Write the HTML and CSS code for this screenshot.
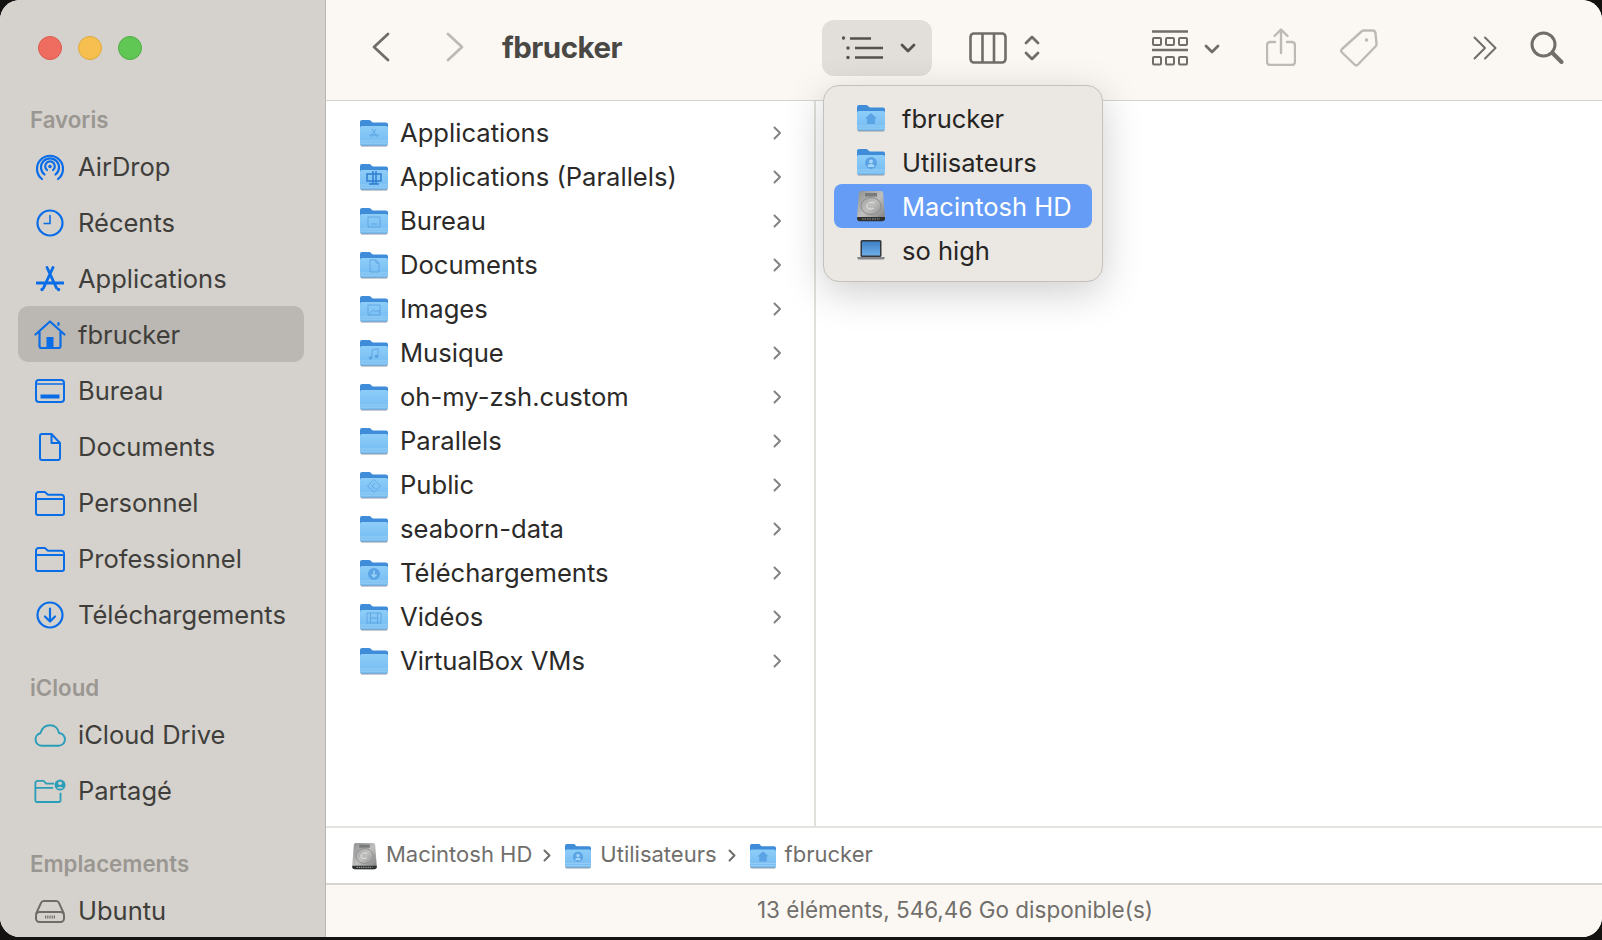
FILE: index.html
```html
<!DOCTYPE html>
<html>
<head>
<title>fbrucker</title>
<link rel="stylesheet" href="styles.css">
</head>
<body>

<svg class="defs" width="0" height="0">
  <defs>
    <linearGradient id="folder-front" x1="0" y1="0" x2="0" y2="1">
      <stop offset="0" stop-color="#8dcdf8"/>
      <stop offset="1" stop-color="#74bbf2"/>
    </linearGradient>
    <linearGradient id="disk-body" x1="0" y1="0" x2="1" y2="1">
      <stop offset="0" stop-color="#8f9190"/>
      <stop offset="0.5" stop-color="#bfc0be"/>
      <stop offset="1" stop-color="#787a79"/>
    </linearGradient>
    <linearGradient id="laptop-screen" x1="0" y1="0" x2="0" y2="1">
      <stop offset="0" stop-color="#3f7fc4"/>
      <stop offset="1" stop-color="#6fb0ea"/>
    </linearGradient>
    <symbol id="folder" viewBox="0 0 28 28">
      <path d="M0.5 26V7h27v19a1.500 1.500 0 0 1-1.500 1.500H2a1.500 1.500 0 0 1-1.500-1.500z" fill="#8d9aa5"/>
      <path d="M0 3a2 2 0 0 1 2-2h7.500c1.500 0 2 2.500 3.500 2.500h13a2 2 0 0 1 2 2V12H0z" fill="#3f8cd9"/>
      <path d="M0 9a2 2 0 0 1 2-2h24a2 2 0 0 1 2 2v15.500a2 2 0 0 1-2 2H2a2 2 0 0 1-2-2z" fill="url(#folder-front)"/>
      <path d="M0 22h28M0 24.200h28" stroke="#a5d6f7" stroke-width="0.7" fill="none"/>
    </symbol>
    <symbol id="disk" viewBox="0 0 28 32">
      <path d="M4 1h20c1.500 0 2 1 2.200 2.500L28 27a3 3 0 0 1-3 4H3a3 3 0 0 1-3-4L1.800 3.500C2 2 2.500 1 4 1z" fill="url(#disk-body)"/>
      <rect x="8" y="3" width="12" height="3.500" fill="#77797a"/>
      <ellipse cx="14" cy="16" rx="10" ry="8.500" fill="none" stroke="#8a8c8b" stroke-width="1"/>
      <path d="M17 13c-4-2-8 1-7 4 1 2.500 5 2.500 7 1" fill="none" stroke="#e6e7e6" stroke-width="1"/>
      <path d="M0.300 27H27.700L28 28a3 3 0 0 1-3 3.200H3A3 3 0 0 1 0 28z" fill="#2f3131"/>
      <path d="M5 29h18" stroke="#9a9c9b" stroke-width="1.200" stroke-dasharray="1.500 1"/>
    </symbol>
    <symbol id="side-folder" viewBox="0 0 30 25">
      <path d="M1 22V3.500A2.500 2.500 0 0 1 3.500 1h6.200c1.500 0 2 2.800 3.800 2.800h13A2.500 2.500 0 0 1 29 6.300V22a2 2 0 0 1-2 2H3a2 2 0 0 1-2-2zM1 8h28" fill="none" stroke="currentColor" stroke-width="2"/>
    </symbol>
  </defs>
</svg>

<div class="window">

  <aside class="sidebar">
    <div class="traffic">
      <span class="light red"></span>
      <span class="light yellow"></span>
      <span class="light green"></span>
    </div>

    <div class="side-label">Favoris</div>
    <div class="side-row">
      <span class="side-icon"><svg width="30" height="30" viewBox="0 0 30 30" fill="none" stroke="currentColor" stroke-width="2.200" stroke-linecap="round"><path d="M7 27A13 13 0 1 1 23 27"/><path d="M9.500 22.500A9 9 0 1 1 20.500 22.500"/><path d="M12 18A4.800 4.800 0 1 1 18 18"/><circle cx="15" cy="14.500" r="1.800" fill="currentColor" stroke="none"/></svg></span>
      AirDrop
    </div>
    <div class="side-row">
      <span class="side-icon"><svg width="28" height="28" viewBox="0 0 28 28" fill="none" stroke="currentColor" stroke-width="2.200"><circle cx="14" cy="14" r="12.500"/><path d="M14 6v8.500H7.500" stroke-width="1.600"/></svg></span>
      Récents
    </div>
    <div class="side-row">
      <span class="side-icon"><svg width="28" height="26" viewBox="0 0 28 26" fill="none" stroke="currentColor" stroke-width="2.900" stroke-linecap="round"><path d="M11 1.500l9.500 20.500M17 1.500L7.500 22M1 17h26"/><path d="M6 23.500h.1M22.500 23.500h.1" stroke-width="3.400"/></svg></span>
      Applications
    </div>
    <div class="side-row selected">
      <span class="side-icon"><svg width="32" height="30" viewBox="0 0 32 30" fill="none" stroke="currentColor" stroke-width="2.200" stroke-linecap="round" stroke-linejoin="round"><path d="M1.500 14.500L16 1.500l14.500 13M24.500 5V3M5.500 12v14a2 2 0 0 0 2 2h17a2 2 0 0 0 2-2V12"/><rect x="12.500" y="17" width="7" height="11" fill="currentColor" stroke="none"/></svg></span>
      fbrucker
    </div>
    <div class="side-row">
      <span class="side-icon"><svg width="30" height="24" viewBox="0 0 30 24" fill="none" stroke="currentColor" stroke-width="2"><rect x="1" y="1" width="28" height="22" rx="3"/><path d="M1 5h28" stroke-width="1.500"/><rect x="5.500" y="15.500" width="19" height="4" fill="currentColor" stroke="none"/></svg></span>
      Bureau
    </div>
    <div class="side-row">
      <span class="side-icon"><svg width="22" height="28" viewBox="0 0 22 28" fill="none" stroke="currentColor" stroke-width="2" stroke-linejoin="round"><path d="M1 3a2 2 0 0 1 2-2h9.500L21 10v15a2 2 0 0 1-2 2H3a2 2 0 0 1-2-2z"/><path d="M12.500 1v9H21"/></svg></span>
      Documents
    </div>
    <div class="side-row">
      <span class="side-icon"><svg width="30" height="25"><use href="#side-folder"/></svg></span>
      Personnel
    </div>
    <div class="side-row">
      <span class="side-icon"><svg width="30" height="25"><use href="#side-folder"/></svg></span>
      Professionnel
    </div>
    <div class="side-row">
      <span class="side-icon"><svg width="28" height="28" viewBox="0 0 28 28" fill="none" stroke="currentColor" stroke-width="2.200" stroke-linecap="round" stroke-linejoin="round"><circle cx="14" cy="14" r="12.500"/><path d="M14 7.500v12.500M9 15.500l5 5 5-5"/></svg></span>
      Téléchargements
    </div>

    <div class="side-label spaced">iCloud</div>
    <div class="side-row teal">
      <span class="side-icon"><svg width="33" height="23" viewBox="0 0 33 23" fill="none" stroke="currentColor" stroke-width="2" stroke-linejoin="round"><path d="M8 22a6.500 6.500 0 0 1-1.500-12.800C8 4.500 11.500 1 16.500 1c5 0 8.500 3.500 9.300 8a6.500 6.500 0 0 1-.8 13z"/></svg></span>
      iCloud Drive
    </div>
    <div class="side-row teal">
      <span class="side-icon"><svg width="35" height="26" viewBox="0 0 35 26" fill="none" stroke="currentColor" stroke-width="2"><path d="M22 5H14c-1.800 0-2.300-3-3.800-3H4a2.500 2.500 0 0 0-2.500 2.500V23a2 2 0 0 0 2 2H27a2 2 0 0 0 2-2V15M1.500 9.500H21"/><circle cx="28.500" cy="6.500" r="6" fill="currentColor" stroke="none"/><circle cx="28.500" cy="4.500" r="2" fill="#d5d2cd" stroke="none"/><path d="M24.800 10.200a4 3 0 0 1 7.400 0z" fill="#d5d2cd" stroke="none"/></svg></span>
      Partagé
    </div>

    <div class="side-label spaced">Emplacements</div>
    <div class="side-row grey">
      <span class="side-icon"><svg width="30" height="23" viewBox="0 0 30 23" fill="none" stroke="currentColor" stroke-width="2"><path d="M1 14L6 3a3 3 0 0 1 2.800-2h12.400A3 3 0 0 1 24 3l5 11"/><rect x="1" y="12" width="28" height="10" rx="3.500"/><path d="M10 17h11" stroke-width="3" stroke-dasharray="1.200 1"/></svg></span>
      Ubuntu
    </div>
  </aside>

  <div class="main">
    <header class="toolbar">
      <svg class="tb-back" width="18" height="30" viewBox="0 0 18 30" fill="none" stroke="#716e69" stroke-width="2.800" stroke-linecap="round" stroke-linejoin="round"><path d="M16 2L2 15l14 13"/></svg>
      <svg class="tb-forward" width="18" height="30" viewBox="0 0 18 30" fill="none" stroke="#bdbab5" stroke-width="2.800" stroke-linecap="round" stroke-linejoin="round"><path d="M2 2l14 13L2 28"/></svg>
      <div class="tb-title">fbrucker</div>

      <div class="tb-button">
        <svg width="42" height="24" viewBox="0 0 42 24" fill="none" stroke="#55524e" stroke-width="2.400"><path d="M8 2.500h21M13 12h28M13 21.500h28"/><circle cx="1.500" cy="2" r="1.700" fill="#55524e" stroke="none"/><circle cx="6" cy="12" r="1.700" fill="#55524e" stroke="none"/><circle cx="6" cy="21.500" r="1.700" fill="#55524e" stroke="none"/></svg>
        <svg class="chev" width="16" height="10" viewBox="0 0 16 10" fill="none" stroke="#55524e" stroke-width="2.800" stroke-linecap="round" stroke-linejoin="round"><path d="M2 2l6 6 6-6"/></svg>
      </div>

      <svg class="tb-columns" width="38" height="32" viewBox="0 0 38 32" fill="none" stroke="#716e69" stroke-width="2.600"><rect x="1.500" y="1.500" width="35" height="29" rx="3.500"/><path d="M13.500 1.500v29M25 1.500v29"/></svg>
      <svg class="tb-updown" width="16" height="28" viewBox="0 0 16 28" fill="none" stroke="#716e69" stroke-width="2.800" stroke-linecap="round" stroke-linejoin="round"><path d="M2 9l6-6 6 6M2 19l6 6 6-6"/></svg>

      <svg class="tb-grid" width="36" height="36" viewBox="0 0 36 36" fill="none" stroke="#716e69" stroke-width="2"><path d="M0 1.500h36M0 20h36" stroke-width="2.600"/><rect x="1" y="8" width="8" height="7" rx="1"/><rect x="14" y="8" width="8" height="7" rx="1"/><rect x="27" y="8" width="8" height="7" rx="1"/><rect x="1" y="27" width="8" height="7.500" rx="1"/><rect x="14" y="27" width="8" height="7.500" rx="1"/><rect x="27" y="27" width="8" height="7.500" rx="1"/></svg>
      <svg class="tb-gridchev" width="16" height="10" viewBox="0 0 16 10" fill="none" stroke="#716e69" stroke-width="2.800" stroke-linecap="round" stroke-linejoin="round"><path d="M2 2l6 6 6-6"/></svg>

      <svg class="tb-share" width="30" height="38" viewBox="0 0 30 38" fill="none" stroke="#bdbab5" stroke-width="2.400" stroke-linecap="round" stroke-linejoin="round"><path d="M9 14H4a3 3 0 0 0-3 3v17a3 3 0 0 0 3 3h22a3 3 0 0 0 3-3V17a3 3 0 0 0-3-3h-5M15 25V2M8.500 8L15 1.500 21.500 8"/></svg>
      <svg class="tb-tag" width="38" height="38" viewBox="0 0 38 38" fill="none" stroke="#bdbab5" stroke-width="2.400" stroke-linejoin="round"><path d="M21.500 2.500a3 3 0 0 1 2-1h9a3 3 0 0 1 3 2.500l1 11a3 3 0 0 1-.8 2.200L18 35.500a2.500 2.500 0 0 1-3.500 0L2 23.500a2.500 2.500 0 0 1 0-3.500z"/><circle cx="26.500" cy="11" r="1.800" fill="#bdbab5" stroke="none"/></svg>

      <svg class="tb-more" width="24" height="24" viewBox="0 0 24 24" fill="none" stroke="#716e69" stroke-width="2" stroke-linecap="round" stroke-linejoin="round"><path d="M1.500 1.500L12 12 1.500 22.500M12 1.500L22.500 12 12 22.500"/></svg>
      <svg class="tb-search" width="34" height="33" viewBox="0 0 34 33" fill="none" stroke="#716e69" stroke-width="3" stroke-linecap="round"><circle cx="13.500" cy="13.500" r="11.500"/><path d="M22.500 22l9 9" stroke-width="4"/></svg>
    </header>

    <div class="content">
      <div class="column">
        <div class="file-row">
          <svg class="folder" viewBox="0 0 28 28"><use href="#folder"/><path class="glyph-line" d="M12 10l5 8M16 10l-5 8M9 16h10"/></svg>
          <span class="file-name">Applications</span>
          <svg class="more-chev" width="9" height="14" viewBox="0 0 9 14"><path d="M1.500 1.500L7 7l-5.500 5.500"/></svg>
        </div>
        <div class="file-row">
          <svg class="folder" viewBox="0 0 28 28"><use href="#folder"/><path class="glyph-dark" d="M7 11h14v7H7zM13 8v13M16 8v13M9 21h10"/></svg>
          <span class="file-name">Applications (Parallels)</span>
          <svg class="more-chev" width="9" height="14" viewBox="0 0 9 14"><path d="M1.500 1.500L7 7l-5.500 5.500"/></svg>
        </div>
        <div class="file-row">
          <svg class="folder" viewBox="0 0 28 28"><use href="#folder"/><path class="glyph-line" d="M8 10h12v10H8zM11 17h6"/></svg>
          <span class="file-name">Bureau</span>
          <svg class="more-chev" width="9" height="14" viewBox="0 0 9 14"><path d="M1.500 1.500L7 7l-5.500 5.500"/></svg>
        </div>
        <div class="file-row">
          <svg class="folder" viewBox="0 0 28 28"><use href="#folder"/><path class="glyph-line" d="M10 9h6l3 3v9h-9zM16 9v3h3"/></svg>
          <span class="file-name">Documents</span>
          <svg class="more-chev" width="9" height="14" viewBox="0 0 9 14"><path d="M1.500 1.500L7 7l-5.500 5.500"/></svg>
        </div>
        <div class="file-row">
          <svg class="folder" viewBox="0 0 28 28"><use href="#folder"/><path class="glyph-line" d="M8 10h12v10H8zM9 19l4-4 3 2 2-2 2 3"/></svg>
          <span class="file-name">Images</span>
          <svg class="more-chev" width="9" height="14" viewBox="0 0 9 14"><path d="M1.500 1.500L7 7l-5.500 5.500"/></svg>
        </div>
        <div class="file-row">
          <svg class="folder" viewBox="0 0 28 28"><use href="#folder"/><path class="glyph-line" d="M12 19v-8l6-1.500v8"/><circle class="glyph-fill" cx="10.500" cy="19" r="1.800"/><circle class="glyph-fill" cx="16.500" cy="17.500" r="1.800"/></svg>
          <span class="file-name">Musique</span>
          <svg class="more-chev" width="9" height="14" viewBox="0 0 9 14"><path d="M1.500 1.500L7 7l-5.500 5.500"/></svg>
        </div>
        <div class="file-row">
          <svg class="folder" viewBox="0 0 28 28"><use href="#folder"/></svg>
          <span class="file-name">oh-my-zsh.custom</span>
          <svg class="more-chev" width="9" height="14" viewBox="0 0 9 14"><path d="M1.500 1.500L7 7l-5.500 5.500"/></svg>
        </div>
        <div class="file-row">
          <svg class="folder" viewBox="0 0 28 28"><use href="#folder"/></svg>
          <span class="file-name">Parallels</span>
          <svg class="more-chev" width="9" height="14" viewBox="0 0 9 14"><path d="M1.500 1.500L7 7l-5.500 5.500"/></svg>
        </div>
        <div class="file-row">
          <svg class="folder" viewBox="0 0 28 28"><use href="#folder"/><path class="glyph-line" d="M14 8.500l6.500 6.500-6.500 6.500L7.500 15zM15 12l-3 3 3 3"/></svg>
          <span class="file-name">Public</span>
          <svg class="more-chev" width="9" height="14" viewBox="0 0 9 14"><path d="M1.500 1.500L7 7l-5.500 5.500"/></svg>
        </div>
        <div class="file-row">
          <svg class="folder" viewBox="0 0 28 28"><use href="#folder"/></svg>
          <span class="file-name">seaborn-data</span>
          <svg class="more-chev" width="9" height="14" viewBox="0 0 9 14"><path d="M1.500 1.500L7 7l-5.500 5.500"/></svg>
        </div>
        <div class="file-row">
          <svg class="folder" viewBox="0 0 28 28"><use href="#folder"/><circle class="glyph-fill" cx="14" cy="15" r="6"/><path class="glyph-cut" d="M14 11.500v6M11.500 15.500l2.500 2.500 2.500-2.500"/></svg>
          <span class="file-name">Téléchargements</span>
          <svg class="more-chev" width="9" height="14" viewBox="0 0 9 14"><path d="M1.500 1.500L7 7l-5.500 5.500"/></svg>
        </div>
        <div class="file-row">
          <svg class="folder" viewBox="0 0 28 28"><use href="#folder"/><path class="glyph-line" d="M7 10h14v10H7zM10.500 10v10M17.500 10v10M10.500 15h7"/></svg>
          <span class="file-name">Vidéos</span>
          <svg class="more-chev" width="9" height="14" viewBox="0 0 9 14"><path d="M1.500 1.500L7 7l-5.500 5.500"/></svg>
        </div>
        <div class="file-row">
          <svg class="folder" viewBox="0 0 28 28"><use href="#folder"/></svg>
          <span class="file-name">VirtualBox VMs</span>
          <svg class="more-chev" width="9" height="14" viewBox="0 0 9 14"><path d="M1.500 1.500L7 7l-5.500 5.500"/></svg>
        </div>
      </div>
      <div class="column-empty"></div>
    </div>

    <div class="pathbar">
      <svg class="path-disk" width="25" height="28"><use href="#disk"/></svg>
      <span>Macintosh HD</span>
      <svg class="path-sep" width="8" height="13" viewBox="0 0 8 13"><path d="M1.500 1.500l5 5-5 5"/></svg>
      <svg class="path-folder" viewBox="0 0 28 28"><use href="#folder"/><circle class="glyph-fill" cx="14" cy="15" r="5.500"/><circle class="glyph-cut-fill" cx="14" cy="13.500" r="1.800"/><path class="glyph-cut-fill" d="M11 18.500a3 2.500 0 0 1 6 0z"/></svg>
      <span>Utilisateurs</span>
      <svg class="path-sep" width="8" height="13" viewBox="0 0 8 13"><path d="M1.500 1.500l5 5-5 5"/></svg>
      <svg class="path-folder" viewBox="0 0 28 28"><use href="#folder"/><path class="glyph-home" d="M14 9l6 5.500h-2V20h-8v-5.500H8z"/></svg>
      <span>fbrucker</span>
    </div>

    <footer class="statusbar">13 éléments, 546,46 Go disponible(s)</footer>
  </div>

  <div class="path-menu">
    <div class="menu-row">
      <svg class="menu-icon" viewBox="0 0 28 28"><use href="#folder"/><path class="glyph-home" d="M14 9l6 5.500h-2V20h-8v-5.500H8z"/></svg>
      fbrucker
    </div>
    <div class="menu-row">
      <svg class="menu-icon" viewBox="0 0 28 28"><use href="#folder"/><circle class="glyph-fill" cx="14" cy="15" r="6"/><circle class="glyph-cut-fill" cx="14" cy="13.500" r="2"/><path class="glyph-cut-fill" d="M10.500 19a3.500 3 0 0 1 7 0z"/></svg>
      Utilisateurs
    </div>
    <div class="menu-row active">
      <svg class="menu-icon tall" width="28" height="32"><use href="#disk"/></svg>
      Macintosh HD
    </div>
    <div class="menu-row">
      <svg class="menu-icon" viewBox="0 0 28 28"><rect x="3.500" y="4" width="21" height="17" rx="1.500" fill="#33363b"/><rect x="5" y="5.500" width="18" height="14" fill="url(#laptop-screen)"/><path d="M0 21h28l-1 2.500H1z" fill="#85878a"/></svg>
      so high
    </div>
  </div>

</div>

</body>
</html>
```

FILE: styles.css
```css
html, body {
  height: 100%;
  margin: 0;
}

body {
  background-color: #141312;
  font-family: Inter, "Liberation Sans", sans-serif;
  overflow: hidden;
}

.defs {
  display: block;
  height: 0;
}

.window {
  position: relative;
  display: flex;
  width: 1602px;
  height: 937px;
  border-radius: 20px;
  overflow: hidden;
  background-color: #fff;
}

/* sidebar */

.sidebar {
  width: 325px;
  flex-shrink: 0;
  border-right: 1px solid #b9b6b1;
  background-color: #d5d2cd;
  overflow: hidden;
}

.traffic {
  display: flex;
  gap: 16px;
  height: 100px;
  padding: 36px 0 0 38px;
  box-sizing: border-box;
}

.light {
  width: 24px;
  height: 24px;
  border-radius: 50%;
  box-sizing: border-box;
}
.red {
  background-color: #ef6c60;
  border: 1px solid #dc5a4e;
}
.yellow {
  background-color: #f6bf4f;
  border: 1px solid #e0a83c;
}
.green {
  background-color: #60c654;
  border: 1px solid #4fae44;
}

.side-label {
  height: 38px;
  line-height: 40px;
  padding-left: 30px;
  font-size: 22.3px;
  font-weight: 600;
  color: #9a9792;
}
.side-label.spaced {
  margin-top: 26px;
}

.side-row {
  display: flex;
  align-items: center;
  gap: 12px;
  height: 56px;
  margin: 0 21px 0 18px;
  padding-left: 16px;
  border-radius: 10px;
  font-size: 25.5px;
  color: #403e3b;
}
.side-row.selected {
  background-color: #bbb7b2;
}

.side-icon {
  display: flex;
  align-items: center;
  justify-content: center;
  width: 32px;
  margin-top: 2px;
  color: #0a6de8;
}
.teal .side-icon {
  color: #2a9db8;
}
.grey .side-icon {
  color: #6e6c69;
}

/* toolbar */

.main {
  flex: 1;
  display: flex;
  flex-direction: column;
  min-width: 0;
}

.toolbar {
  display: flex;
  align-items: center;
  height: 101px;
  flex-shrink: 0;
  box-sizing: border-box;
  border-bottom: 1px solid #d8d5d0;
  background-color: #fbf8f4;
  padding-left: 46px;
  padding-bottom: 5px;
}

.toolbar svg {
  flex-shrink: 0;
}

.tb-back { margin-bottom: 2px; }
.tb-forward { margin-left: 56px; margin-bottom: 2px; }
.tb-columns { margin-left: 37px; }
.tb-updown { margin-left: 17px; }
.tb-grid { margin-left: 112px; }
.tb-gridchev { margin-left: 16px; margin-top: 2px; }
.tb-share { margin-left: 46px; margin-top: -2px; }
.tb-tag { margin-left: 44px; }
.tb-more { margin-left: 95px; }
.tb-search { margin-left: 33px; }

.tb-title {
  width: 320px;
  flex-shrink: 0;
  margin-left: 38px;
  margin-bottom: 2px;
  font-size: 29.5px;
  font-weight: 700;
  letter-spacing: -0.5px;
  color: #4a4845;
}

.tb-button {
  display: flex;
  align-items: center;
  width: 110px;
  height: 56px;
  box-sizing: border-box;
  padding-left: 20px;
  border-radius: 12px;
  background-color: #e2dfda;
}
.tb-button .chev {
  margin-left: 16px;
}

/* file columns */

.content {
  flex: 1;
  display: flex;
  min-height: 0;
  background-color: #fff;
}

.column {
  width: 490px;
  box-sizing: border-box;
  padding: 10px 0 0 34px;
  border-right: 2px solid #e2e0dc;
}

.column-empty {
  flex: 1;
}

.file-row {
  display: flex;
  align-items: center;
  gap: 12px;
  height: 44px;
  box-sizing: border-box;
  padding: 0 32px 2px 0;
}

.folder {
  width: 28px;
  height: 28px;
  margin-top: 2px;
  flex-shrink: 0;
}

.file-name {
  flex: 1;
  font-size: 25.6px;
  color: #2b2a28;
}

.more-chev {
  margin-top: 2px;
  fill: none;
  stroke: #858380;
  stroke-width: 2;
  stroke-linecap: round;
  stroke-linejoin: round;
}

.glyph-line,
.glyph-dark {
  fill: none;
  stroke: #4d97dc;
  stroke-width: 1;
  opacity: 0.65;
}
.glyph-dark {
  stroke: #2f7ed0;
  stroke-width: 1.500;
  opacity: 1;
}
.glyph-fill {
  fill: #5aa3e4;
}
.glyph-cut {
  fill: none;
  stroke: #9bd2f8;
  stroke-width: 1.500;
}
.glyph-cut-fill {
  fill: #a5d6f9;
}
.glyph-home {
  fill: #5aa3e4;
}

/* path bar and status bar */

.pathbar {
  display: flex;
  align-items: center;
  height: 57px;
  flex-shrink: 0;
  box-sizing: border-box;
  padding: 0 0 4px 26px;
  border-top: 2px solid #e5e3df;
  font-size: 22px;
  color: #706e6b;
  background-color: #fff;
}

.pathbar svg {
  margin-top: 4px;
}

.path-disk {
  margin-right: 9px;
}
.path-sep {
  margin: 0 14px 0 11px;
  fill: none;
  stroke: #706e6b;
  stroke-width: 2;
  stroke-linecap: round;
  stroke-linejoin: round;
}
.path-folder {
  width: 26px;
  height: 26px;
  margin-right: 9px;
}

.statusbar {
  height: 54px;
  flex-shrink: 0;
  box-sizing: border-box;
  padding-right: 18px;
  border-top: 2px solid #d8d5d0;
  background-color: #fbf8f4;
  line-height: 50px;
  text-align: center;
  font-size: 22.5px;
  color: #716f6b;
}

/* path popup */

.path-menu {
  position: absolute;
  left: 823px;
  top: 85px;
  width: 280px;
  height: 197px;
  box-sizing: border-box;
  padding: 10px 10px 0;
  border: 1px solid #c4c1bc;
  border-radius: 16px;
  background-color: #ebe8e3;
  box-shadow: 0 10px 40px rgba(0, 0, 0, 0.2);
}

.menu-row {
  display: flex;
  align-items: center;
  gap: 17px;
  height: 44px;
  padding-left: 23px;
  border-radius: 8px;
  font-size: 25.5px;
  color: #262523;
}
.menu-row.active {
  background-color: #659cf6;
  color: #fff;
}

.menu-icon {
  width: 28px;
  height: 28px;
  flex-shrink: 0;
}
.menu-icon.tall {
  height: 32px;
}
```
